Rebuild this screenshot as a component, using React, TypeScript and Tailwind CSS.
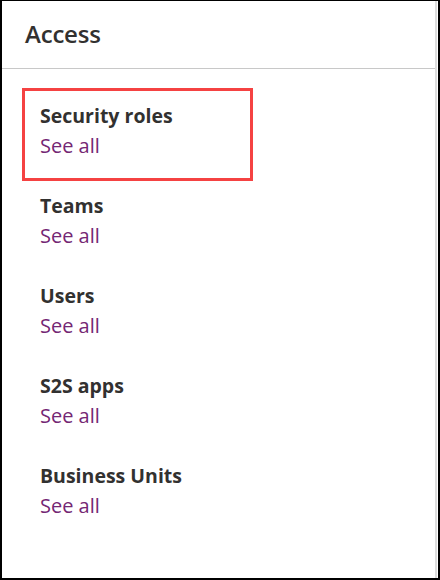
import React from 'react';

const sections = ['Security roles', 'Teams', 'Users', 'S2S apps', 'Business Units'];

export default function App() {
  return (
    <div
      className="relative w-[440px] h-[580px] bg-white border-t border-l-2 border-r-2 border-b-2 border-black overflow-hidden"
      style={{ fontFamily: '"Open Sans", "Noto Sans", sans-serif' }}
    >
      <div className="h-full mr-[1px] border-r-2 border-[#dcdcdc] flex flex-col">
        {/* Header */}
        <div className="h-[68px] flex items-center pl-[23px] border-b border-[#c8c8c8]">
          <h1 className="text-[24px] font-semibold text-[#323130] tracking-[-0.2px] -mt-[2px]">Access</h1>
        </div>

        {/* Section list */}
        <div className="flex flex-col gap-[30px] pt-[32px] pl-[38px]">
          {sections.map((name) => (
            <div key={name} className="flex flex-col">
              <span className="text-[19.5px] leading-[30px] font-bold text-[#323130]">{name}</span>
              <a className="text-[20px] leading-[30px] text-[#742774] cursor-pointer">See all</a>
            </div>
          ))}
        </div>
      </div>

      {/* Highlight around the first section */}
      <div className="absolute left-[20px] top-[87px] w-[231px] h-[93px] border-[3px] border-[#f54242] pointer-events-none" />
    </div>
  );
}
